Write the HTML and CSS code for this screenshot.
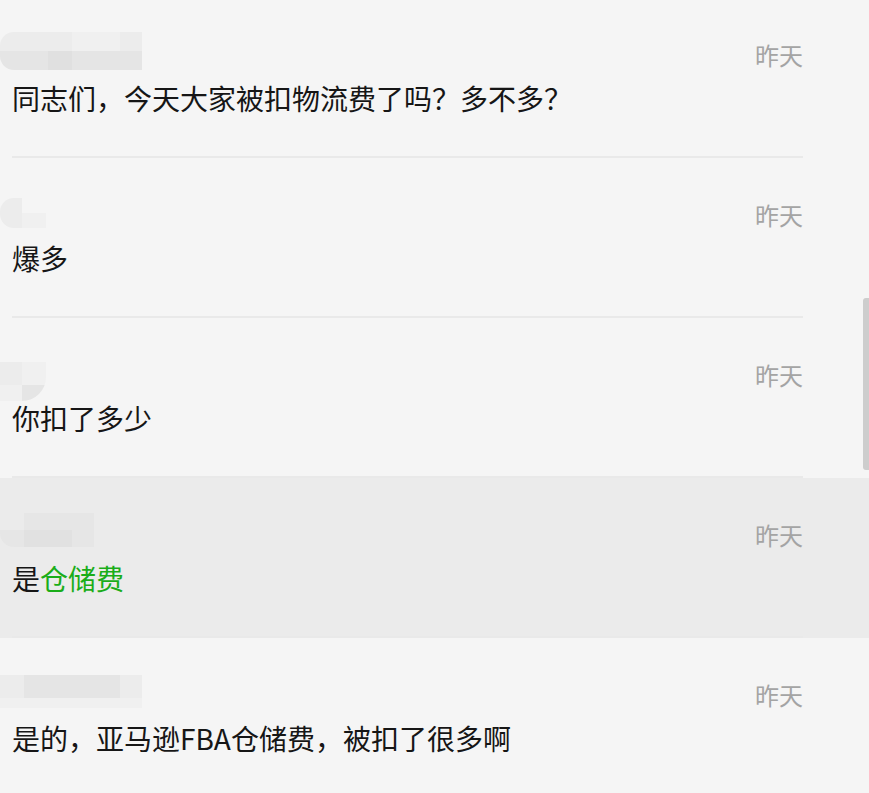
FILE: index.html
```html
<!DOCTYPE html>
<html lang="zh-CN">
<head>
    <meta charset="UTF-8">
    <meta name="viewport" content="width=device-width, initial-scale=1.0">
    <title>聊天记录</title>
    <link rel="stylesheet" href="styles.css">
</head>
<body>
    <div class="list">
        <div class="row">
            <div class="inner">
                <div class="head">
                    <div class="mosaic cols6">
                        <i class="s1"></i><i class="s1"></i><i class="s1"></i><i class="s0a"></i><i class="s0a"></i><i class="s1"></i>
                        <i class="s2"></i><i class="s2"></i><i class="s3"></i><i class="s2"></i><i class="s2"></i><i class="s2"></i>
                    </div>
                    <span class="time">昨天</span>
                </div>
                <p class="msg">同志们，今天大家被扣物流费了吗？多不多？</p>
            </div>
        </div>

        <div class="row">
            <div class="inner">
                <div class="head">
                    <div class="mosaic cols2 small">
                        <i class="s1"></i><i class="s0"></i>
                        <i class="s1"></i><i class="s0a"></i>
                    </div>
                    <span class="time">昨天</span>
                </div>
                <p class="msg">爆多</p>
            </div>
        </div>

        <div class="row">
            <div class="inner">
                <div class="head">
                    <div class="mosaic cols2 round">
                        <i class="s0"></i><i class="s0"></i>
                        <i class="s1"></i><i class="s0a"></i>
                        <i class="s0a"></i><i class="s2"></i>
                    </div>
                    <span class="time">昨天</span>
                </div>
                <p class="msg">你扣了多少</p>
            </div>
        </div>

        <div class="row active">
            <div class="inner">
                <div class="head">
                    <div class="mosaic cols4">
                        <i class="s0"></i><i class="h1"></i><i class="h1"></i><i class="h1"></i>
                        <i class="h1"></i><i class="h2"></i><i class="h2"></i><i class="h1"></i>
                    </div>
                    <span class="time">昨天</span>
                </div>
                <p class="msg">是<span class="hit">仓储费</span></p>
            </div>
        </div>

        <div class="row">
            <div class="inner">
                <div class="head">
                    <div class="mosaic cols6 low">
                        <i class="s1"></i><i class="s2"></i><i class="s2"></i><i class="s2"></i><i class="s2"></i><i class="s1"></i>
                        <i class="s0a"></i><i class="s0a"></i><i class="s0a"></i><i class="s0a"></i><i class="s0a"></i><i class="s0a"></i>
                    </div>
                    <span class="time">昨天</span>
                </div>
                <p class="msg">是的，亚马逊FBA仓储费，被扣了很多啊</p>
            </div>
        </div>
    </div>

    <div class="scrollbar"></div>
</body>
</html>
```

FILE: styles.css
```css
/* Reset */
* {
    margin: 0;
    padding: 0;
    box-sizing: border-box;
}

body {
    font-family: "Noto Sans CJK SC", "Microsoft YaHei", sans-serif;
    background: #f5f5f5;
    color: #161616;
    width: 869px;
    height: 793px;
    overflow: hidden;
    position: relative;
}

/* Lista de mensagens (rolada um pouco para cima) */
.list {
    margin-top: -2px;
}

.row {
    height: 160px;
    padding: 0 66px 0 12px;
}

.row.active {
    background: #ebebeb;
}

.inner {
    height: 160px;
    border-bottom: 2px solid #e9e9e9;
    padding-top: 34px;
}

.head {
    display: flex;
    justify-content: space-between;
    align-items: flex-start;
    height: 38px;
}

.time {
    font-size: 24px;
    line-height: 30px;
    margin-top: 8px;
    color: #a4a4a4;
}

.msg {
    font-size: 28px;
    line-height: 40px;
    margin-top: 8px;
    white-space: nowrap;
}

.hit {
    color: #1aad19;
}

/* Nome borrado em mosaico */
.mosaic {
    display: grid;
    grid-auto-rows: 19px;
    margin-left: -12px;
    border-radius: 14px 0 0 14px;
    overflow: hidden;
}

.mosaic.cols6 {
    grid-template-columns: repeat(5, 24px) 22px;
}

.mosaic.cols4 {
    grid-template-columns: repeat(3, 24px) 22px;
    margin-top: 1px;
    grid-auto-rows: 17px;
}

.mosaic.cols2 {
    grid-template-columns: 22px 24px;
}

.mosaic.small {
    margin-top: 6px;
    grid-auto-rows: 15px;
}

.mosaic.round {
    grid-auto-rows: 10px 23px 16px;
    border-radius: 0 0 24px 0;
}

.mosaic.low {
    margin-top: 3px;
    grid-auto-rows: 23px 10px;
    border-radius: 0;
}

.mosaic i {
    display: block;
}

.s0 { background: transparent; }
.s0a { background: #f0f0f0; }
.s1 { background: #ececec; }
.s2 { background: #e5e5e5; }
.s3 { background: #e0e0e0; }
.h1 { background: #e6e6e6; }
.h2 { background: #e1e1e1; }

/* Barra de rolagem sobreposta */
.scrollbar {
    position: absolute;
    top: 298px;
    right: 0;
    width: 6px;
    height: 172px;
    background: #cdcdcd;
    border-radius: 3px 0 0 3px;
}
```
